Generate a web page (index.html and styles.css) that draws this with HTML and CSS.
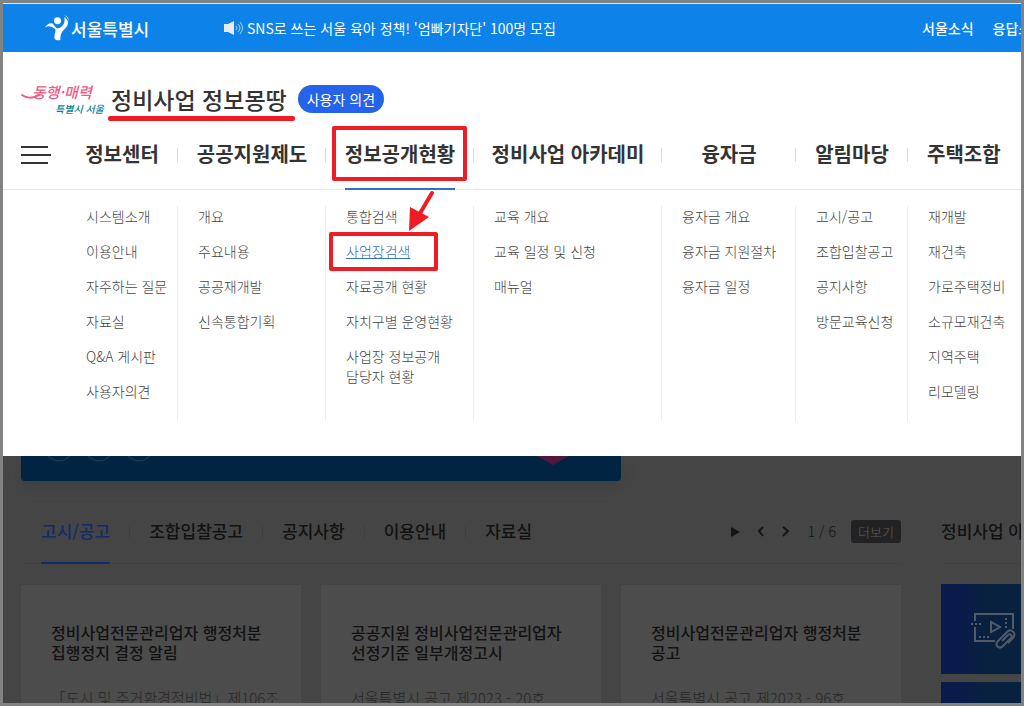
FILE: index.html
```html
<!DOCTYPE html>
<html lang="ko">
<head>
<meta charset="utf-8">
<meta name="viewport" content="width=device-width, initial-scale=1">
<title>정비사업 정보몽땅</title>
<link rel="stylesheet" href="styles.css">
</head>
<body>
<div class="page">
  <div class="topbar">
    <a class="city" href="#">
      <svg class="city-mark" viewBox="0 0 26 28" aria-hidden="true"><circle cx="13" cy="6" r="3.6"/><path d="M0 13C2 9 7 7 9 10c2 3 4 5 7 3 4-3 5-6 4-11 5 3 5 8 1 12-4 4-5 6-5 12-4 1-7 0-6-5 .4-3 2-5 0-7C7 13 5 10 0 13z"/><path d="M20 0c3 1 5 3 5 8 0-3-2-6-5-8z"/></svg>
      <span>서울특별시</span>
    </a>
    <a class="notice" href="#">
      <svg class="speaker" viewBox="0 0 20 14" aria-hidden="true"><path class="fill" d="M0 3h4l6-3v14l-6-3H0z"/><path class="wave" d="M12 5q2 2 0 4M14 3q4 4 0 8M16 1q5 6 0 12"/></svg>
      <span>SNS로 쓰는 서울 육아 정책! '엄빠기자단' 100명 모집</span>
    </a>
    <nav class="toplinks"><a href="#">서울소식</a><a href="#">응답소</a></nav>
  </div>

  <header class="header">
    <div class="brand">
      <svg class="slogan" viewBox="0 0 84 34" role="img" aria-label="동행·매력 특별시 서울">
        <path class="swash" d="M1 13c4 3 11 4 17 0"/>
        <text class="pink" x="11" y="16">동행·매력</text>
        <text class="teal" x="34" y="31">특별시 서울</text>
      </svg>
      <h1 class="title">정비사업 정보몽땅</h1>
      <a class="opinion" href="#">사용자 의견</a>
    </div>
    <nav class="menu">
      <button class="burger" type="button" aria-label="전체메뉴"><i></i><i></i><i></i></button>
      <a class="head" href="#">정보센터</a>
      <a class="head" href="#">공공지원제도</a>
      <a class="head active" href="#">정보공개현황<span class="mark"></span></a>
      <a class="head" href="#">정비사업 아카데미</a>
      <a class="head" href="#">융자금</a>
      <a class="head" href="#">알림마당</a>
      <a class="head" href="#">주택조합</a>
    </nav>
    <div class="submenu">
      <ul><li><a href="#">시스템소개</a></li><li><a href="#">이용안내</a></li><li><a href="#">자주하는 질문</a></li><li><a href="#">자료실</a></li><li><a href="#">Q&amp;A 게시판</a></li><li><a href="#">사용자의견</a></li></ul>
      <ul><li><a href="#">개요</a></li><li><a href="#">주요내용</a></li><li><a href="#">공공재개발</a></li><li><a href="#">신속통합기획</a></li></ul>
      <ul><li><a href="#">통합검색</a></li><li class="picked"><a href="#">사업장검색</a><svg class="arrow" viewBox="0 0 30 44" aria-hidden="true"><path class="shaft" d="M25 4L12 26"/><path d="M2 42L3 18L22 28z"/></svg></li><li><a href="#">자료공개 현황</a></li><li><a href="#">자치구별 운영현황</a></li><li><a href="#">사업장 정보공개<br>담당자 현황</a></li></ul>
      <ul><li><a href="#">교육 개요</a></li><li><a href="#">교육 일정 및 신청</a></li><li><a href="#">매뉴얼</a></li></ul>
      <ul><li><a href="#">융자금 개요</a></li><li><a href="#">융자금 지원절차</a></li><li><a href="#">융자금 일정</a></li></ul>
      <ul><li><a href="#">고시/공고</a></li><li><a href="#">조합입찰공고</a></li><li><a href="#">공지사항</a></li><li><a href="#">방문교육신청</a></li></ul>
      <ul><li><a href="#">재개발</a></li><li><a href="#">재건축</a></li><li><a href="#">가로주택정비</a></li><li><a href="#">소규모재건축</a></li><li><a href="#">지역주택</a></li><li><a href="#">리모델링</a></li></ul>
    </div>
  </header>

  <main class="content">
    <div class="banner">
      <svg class="dots" viewBox="0 0 120 8" aria-hidden="true"><circle cx="20" cy="-9" r="14"/><circle cx="60" cy="-9" r="14"/><circle cx="100" cy="-9" r="14"/></svg>
      <svg class="gem" viewBox="0 0 32 9" aria-hidden="true"><path d="M0 0h32L16 9z"/></svg>
    </div>
    <div class="columns">
      <section class="board">
        <div class="tabs">
          <a class="tab on" href="#">고시/공고</a><a class="tab" href="#">조합입찰공고</a><a class="tab" href="#">공지사항</a><a class="tab" href="#">이용안내</a><a class="tab" href="#">자료실</a>
          <div class="pager">
            <button type="button" aria-label="재생"><svg viewBox="0 0 10 12"><path class="fill" d="M0 2l9 5-9 5z"/></svg></button>
            <button type="button" aria-label="이전"><svg viewBox="0 0 10 12"><path d="M7 2L3 6l4 5"/></svg></button>
            <button type="button" aria-label="다음"><svg viewBox="0 0 10 12"><path d="M2 2l5 4-5 5"/></svg></button>
            <span class="count">1 / 6</span>
            <a class="more" href="#">더보기</a>
          </div>
        </div>
        <div class="cards">
          <article class="card"><h2>정비사업전문관리업자 행정처분<br>집행정지 결정 알림</h2><p>「도시 및 주거환경정비법」제106조</p></article>
          <article class="card"><h2>공공지원 정비사업전문관리업자<br>선정기준 일부개정고시</h2><p>서울특별시 공고 제2023 - 20호</p></article>
          <article class="card"><h2>정비사업전문관리업자 행정처분<br>공고</h2><p>서울특별시 공고 제2023 - 96호</p></article>
        </div>
      </section>
      <aside class="academy">
        <h2>정비사업 아카데미</h2>
        <a class="tile" href="#" aria-label="동영상 자료"><svg viewBox="0 0 46 38" aria-hidden="true"><path d="M4 9V2h38v15M4 15v14h20M0 12h2m2 0h2m2 0h2M8 25h2m2 0h2m2 0h2M35 6v2m0 2v2m0 2v2M20 10v10l9-5z"/><path d="M31 29l6-6c2-2 5 1 3 3l-8 8c-4 4-9-1-5-5l9-9c4-4 10 1 6 6l-5 5"/></svg></a>
        <a class="tile" href="#" aria-label="교육 신청"></a>
      </aside>
    </div>
  </main>
</div>
</body>
</html>
```
FILE: styles.css
```css
*, *::before, *::after { box-sizing: border-box; }
body { margin: 0; font-family: "Noto Sans CJK KR", sans-serif; color: #333; }
a { color: inherit; text-decoration: none; }
button { border: 0; padding: 0; background: none; color: inherit; }
h1, h2, p, ul { margin: 0; padding: 0; }
ul { list-style: none; }

.page { height: 100vh; overflow: hidden; border: 3px solid #828282; background: #454545; white-space: nowrap; }

.topbar { display: flex; align-items: center; height: 49px; border-top: 1px solid #dde6ee; background: #0d82e9; color: #fff; overflow: hidden; }
.city { display: flex; align-items: center; gap: 1px; width: 179px; margin-left: 42px; font-size: 17px; font-weight: 500; }
.city-mark { width: 25px; height: 27px; fill: #fff; }
.notice { display: flex; align-items: center; gap: 3px; font-size: 14px; }
.speaker { width: 20px; height: 14px; }
.speaker .fill { fill: #e9e9e9; }
.wave { fill: none; stroke: #a9d0f2; stroke-width: 1; }
.toplinks { display: flex; gap: 19px; width: 99px; margin-left: auto; font-size: 14px; font-weight: 500; }

.header { position: relative; height: 404px; background: #fff; }
.brand { display: flex; align-items: center; height: 81px; padding: 12px 18px 0; }
.slogan { width: 84px; height: 34px; margin-right: 6px; overflow: visible; }
.slogan text { font-weight: 500; font-style: italic; }
.pink { font-size: 15px; fill: #ee5a84; }
.teal { font-size: 10px; fill: #0b7f92; }
.swash { fill: none; stroke: #ee5a84; stroke-width: 2; stroke-linecap: round; }
.title { position: relative; font-size: 23px; line-height: 34px; font-weight: 500; }
.title::after { content: ""; position: absolute; left: -3px; right: -8px; bottom: -5px; height: 5px; border-radius: 2px; background: #ee1c25; }
.opinion { margin-left: 11px; padding: 0 9px; border-radius: 14px; background: #2563eb; color: #fff; font-size: 14px; line-height: 28px; }

.menu, .submenu { display: grid; grid-template-columns: 112px 148px 148px 188px 134px 112px 1fr; padding-left: 63px; }
.menu { position: relative; height: 57px; border-bottom: 1px solid #e7e7e7; }
.burger { position: absolute; left: 18px; top: 13px; display: grid; gap: 6px; width: 30px; }
.burger i { height: 2px; background: #333; }
.burger i:nth-child(odd) { width: 27px; }
.head { position: relative; font-size: 20px; line-height: 42px; font-weight: 700; text-align: center; }
.head:not(:last-child)::before { content: ""; position: absolute; right: 0; top: 15px; width: 1px; height: 14px; background: #ddd; }
.head:last-child { padding-left: 19px; text-align: left; }
.active::after { content: ""; position: absolute; left: 19px; right: 19px; bottom: -1px; height: 2px; background: #3470c4; }
.mark { position: absolute; left: 6px; right: 7px; top: -7px; height: 55px; border: 4px solid #ee1c25; border-radius: 2px; }

.submenu { padding-top: 16px; }
.submenu ul { display: flex; flex-direction: column; gap: 15px; min-height: 215px; padding-left: 20px; color: #444; font-size: 14px; line-height: 20px; font-weight: 300; }
.submenu ul:not(:last-child) { border-right: 1px solid #eee; }
.submenu .picked { position: relative; color: #3470c4; }
.picked a { text-decoration: underline; }
.picked::before { content: ""; position: absolute; left: -17px; top: -9px; width: 109px; height: 39px; border: 4px solid #ee1c25; border-radius: 2px; }
.arrow { position: absolute; left: 61px; top: -52px; width: 30px; height: 44px; fill: #ee1c25; }
.shaft { stroke: #ee1c25; stroke-width: 4; stroke-linecap: round; }

.content { padding-left: 18px; color: #121212; }
.banner { display: flex; justify-content: space-between; align-items: flex-start; width: 600px; height: 25px; padding: 0 52px 0 18px; border-radius: 0 0 4px 4px; background: #002442; box-shadow: 0 8px 12px #3f4140; }
.dots { width: 120px; height: 8px; fill: none; stroke: #253f56; }
.gem { width: 32px; height: 9px; fill: #51173b; }
.columns { display: grid; grid-template-columns: 880px 1fr; gap: 40px; }
.tabs { display: flex; height: 83px; padding: 33px 0 0 20px; border-bottom: 1px solid #404040; font-size: 17px; line-height: 34px; font-weight: 500; }
.tab { position: relative; margin-right: 39px; }
.tab:not(:nth-child(5))::after { content: ""; position: absolute; right: -20px; top: 12px; width: 1px; height: 12px; background: #3e3e3e; }
.on { color: #102c69; }
.on::before { content: ""; position: absolute; left: 0; right: 0; bottom: -1px; height: 2px; background: #102c69; }
.pager { display: flex; align-items: center; gap: 15px; height: 34px; margin-left: auto; font-size: 14px; font-weight: 300; }
.pager svg { display: block; width: 10px; height: 12px; fill: none; stroke: #151515; stroke-width: 2; }
.pager .fill { fill: #151515; stroke: none; }
.count { padding: 0 0 0 2px; }
.more { width: 50px; border-radius: 3px; background: #222224; color: #5c5c5c; font-size: 13px; line-height: 23px; text-align: center; }
.cards { display: grid; grid-template-columns: repeat(3, 280px); gap: 20px; padding-top: 21px; }
.card { height: 200px; padding: 37px 30px; background: #4c4c4c; overflow: hidden; }
.card h2 { font-size: 16px; line-height: 20px; font-weight: 500; }
.card p { margin-top: 24px; color: #272727; font-size: 15px; line-height: 24px; font-weight: 300; }
.academy { overflow: hidden; }
.academy h2 { height: 83px; padding-top: 33px; border-bottom: 1px solid #404040; font-size: 17px; line-height: 34px; font-weight: 500; }
.tile { display: block; height: 90px; margin: 20px 0 -12px; padding: 28px 30px; background: linear-gradient(90deg, #091b4a 20px, #08213f 44px); }
.tile svg { width: 46px; height: 38px; fill: none; stroke: #515a66; stroke-width: 2; }
```
